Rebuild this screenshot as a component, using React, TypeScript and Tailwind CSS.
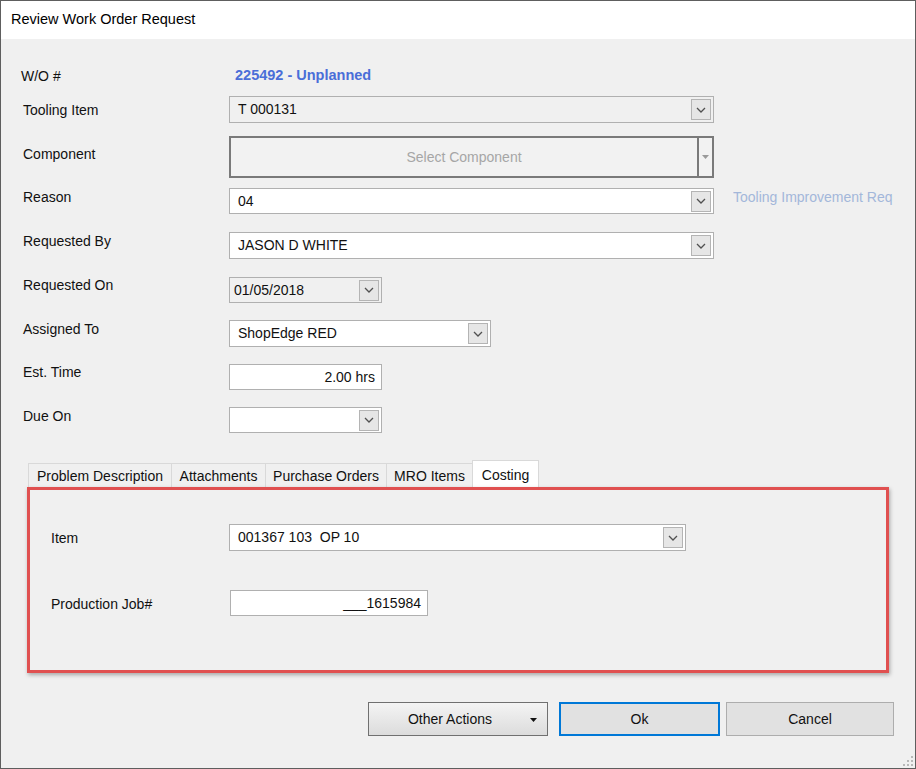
import React from "react";

const Chevron = () => (
  <svg width="10" height="6" viewBox="0 0 10 6" fill="none">
    <polyline points="1,1 5,5 9,1" stroke="#505050" strokeWidth="1.3" />
  </svg>
);

const DropBtn = () => (
  <div className="w-[20px] h-[21px] my-auto mr-[2px] bg-[#e6e6e6] border border-[#b4b4b4] flex items-center justify-center shrink-0">
    <Chevron />
  </div>
);

function Combo({
  w,
  h,
  text,
  bg = "bg-white",
}: {
  w: string;
  h: string;
  text: string;
  bg?: string;
}) {
  return (
    <div className={`${w} ${h} ${bg} border border-[#b0b0b0] flex items-center`}>
      <div className="flex-1 pl-[8px] text-[14px] text-[#111] whitespace-pre overflow-hidden">{text}</div>
      <DropBtn />
    </div>
  );
}

export default function App() {
  return (
    <div
      className="w-[916px] h-[769px] border border-[#5e5e5e] bg-[#f0f0f0] flex flex-col relative overflow-hidden text-[#111]"
      style={{ fontFamily: '"Liberation Sans", Arial, sans-serif' }}
    >
      <div className="h-[38px] bg-white flex items-center pl-[10px] text-[14.5px] text-black shrink-0">
        Review Work Order Request
      </div>

      <div className="flex flex-col">
        {/* W/O */}
        <div className="flex h-[16px] mt-[29px] pl-[20px] items-center text-[14px]">
          <div className="w-[214px]">W/O #</div>
          <div className="font-bold text-[#4a6ed8] text-[14.5px]">225492 - Unplanned</div>
        </div>

        {/* Tooling Item */}
        <div className="flex h-[27px] mt-[12px] pl-[22px] text-[14px]">
          <div className="w-[206px] pt-[6px] leading-[16px]">Tooling Item</div>
          <Combo w="w-[485px]" h="h-[27px]" text="T 000131" bg="bg-[#f0f0f0]" />
        </div>

        {/* Component */}
        <div className="flex h-[42px] mt-[13px] pl-[22px] text-[14px]">
          <div className="w-[206px] pt-[10px] leading-[16px]">Component</div>
          <div className="flex w-[485px] h-[42px]">
            <div className="w-[470px] h-full bg-[#f2f2f2] border-2 border-[#7a7a7a] flex items-center justify-center text-[#a6a6a6]">
              Select Component
            </div>
            <div className="w-[15px] h-full bg-[#f2f2f2] border-y-2 border-r-2 border-[#7a7a7a] flex items-center justify-center">
              <svg width="7" height="4" viewBox="0 0 7 4">
                <polygon points="0,0 7,0 3.5,4" fill="#9a9a9a" />
              </svg>
            </div>
          </div>
        </div>

        {/* Reason */}
        <div className="flex h-[26px] mt-[10px] pl-[22px] text-[14px]">
          <div className="w-[206px] pt-[1px] leading-[16px]">Reason</div>
          <Combo w="w-[485px]" h="h-[26px]" text="04" />
          <div className="w-[160px] ml-[19px] pt-[1px] leading-[16px] whitespace-nowrap overflow-hidden text-[#a3b7da]">
            Tooling Improvement Request
          </div>
        </div>

        {/* Requested By */}
        <div className="flex h-[27px] mt-[18px] pl-[22px] text-[14px]">
          <div className="w-[206px] pt-[1px] leading-[16px]">Requested By</div>
          <Combo w="w-[485px]" h="h-[27px]" text="JASON D WHITE" />
        </div>

        {/* Requested On */}
        <div className="flex h-[26px] mt-[18px] pl-[22px] text-[14px]">
          <div className="w-[206px] pt-[0px] leading-[16px]">Requested On</div>
          <div className="w-[153px] h-[26px] bg-[#f0f0f0] border border-[#b0b0b0] flex items-center">
            <div className="flex-1 pl-[4px] whitespace-nowrap">01/05/2018</div>
            <DropBtn />
          </div>
        </div>

        {/* Assigned To */}
        <div className="flex h-[27px] mt-[17px] pl-[22px] text-[14px]">
          <div className="w-[206px] pt-[1px] leading-[16px]">Assigned To</div>
          <Combo w="w-[262px]" h="h-[27px]" text="ShopEdge RED" />
        </div>

        {/* Est. Time */}
        <div className="flex h-[26px] mt-[17px] pl-[22px] text-[14px]">
          <div className="w-[206px] pt-[0px] leading-[16px]">Est. Time</div>
          <div className="w-[153px] h-[26px] bg-white border border-[#b0b0b0] flex items-center justify-end pr-[6px]">
            2.00 hrs
          </div>
        </div>

        {/* Due On */}
        <div className="flex h-[26px] mt-[17px] pl-[22px] text-[14px]">
          <div className="w-[206px] pt-[1px] leading-[16px]">Due On</div>
          <div className="w-[153px] h-[26px] bg-white border border-[#b0b0b0] flex items-center">
            <div className="flex-1" />
            <DropBtn />
          </div>
        </div>

        {/* Tabs */}
        <div className="flex items-end h-[27px] mt-[27px] pl-[27px] text-[14px]">
          <div className="w-[143px] h-[24px] border-t border-l border-[#d9d9d9] flex items-center justify-center pt-[2px]">
            Problem Description
          </div>
          <div className="w-[94px] h-[24px] border-t border-l border-[#d9d9d9] flex items-center justify-center pt-[2px]">
            Attachments
          </div>
          <div className="w-[121px] h-[24px] border-t border-l border-[#d9d9d9] flex items-center justify-center pt-[2px]">
            Purchase Orders
          </div>
          <div className="w-[86px] h-[24px] border-t border-l border-[#d9d9d9] flex items-center justify-center pt-[2px]">
            MRO Items
          </div>
          <div className="w-[67px] h-[27px] bg-white border-t border-x border-[#d9d9d9] flex items-start justify-center pt-[4px]">
            Costing
          </div>
        </div>

        {/* Costing panel */}
        <div className="ml-[26px] w-[862px] h-[186px] border-[3px] border-[#e05050] shadow-[1px_2px_4px_rgba(0,0,0,0.3)] flex flex-col text-[14px]">
          <div className="flex h-[27px] mt-[34px] pl-[21px]">
            <div className="w-[178px] pt-[6px] leading-[16px]">Item</div>
            <Combo w="w-[457px]" h="h-[27px]" text="001367 103  OP 10" />
          </div>
          <div className="flex h-[26px] mt-[39px] pl-[21px]">
            <div className="w-[179px] pt-[6px] leading-[16px]">Production Job#</div>
            <div className="w-[198px] h-[26px] bg-white border border-[#b0b0b0] flex items-center justify-end pr-[6px] whitespace-pre">
              ___1615984
            </div>
          </div>
        </div>

        {/* Buttons */}
        <div className="flex h-[34px] mt-[29px] pl-[367px] text-[14px]">
          <div className="w-[180px] h-[34px] border border-[#707070] bg-gradient-to-b from-[#f4f4f4] to-[#dcdcdc] flex items-center relative">
            <div className="flex-1 text-center pr-[16px]">Other Actions</div>
            <svg className="absolute right-[10px] top-[15px]" width="7" height="4" viewBox="0 0 7 4">
              <polygon points="0,0 7,0 3.5,4" fill="#111" />
            </svg>
          </div>
          <div className="w-[161px] h-[34px] ml-[11px] border-2 border-[#0078d7] bg-[#e1e1e1] flex items-center justify-center">
            Ok
          </div>
          <div className="w-[168px] h-[34px] ml-[6px] border border-[#adadad] bg-[#e1e1e1] flex items-center justify-center">
            Cancel
          </div>
        </div>
      </div>

      {/* resize grip */}
      <svg className="absolute right-[2px] bottom-[2px]" width="10" height="10" viewBox="0 0 10 10">
        <rect x="8" y="0" width="2" height="2" fill="#b8b8b8" />
        <rect x="4" y="4" width="2" height="2" fill="#b8b8b8" />
        <rect x="8" y="4" width="2" height="2" fill="#b8b8b8" />
        <rect x="0" y="8" width="2" height="2" fill="#b8b8b8" />
        <rect x="4" y="8" width="2" height="2" fill="#b8b8b8" />
        <rect x="8" y="8" width="2" height="2" fill="#b8b8b8" />
      </svg>
    </div>
  );
}
